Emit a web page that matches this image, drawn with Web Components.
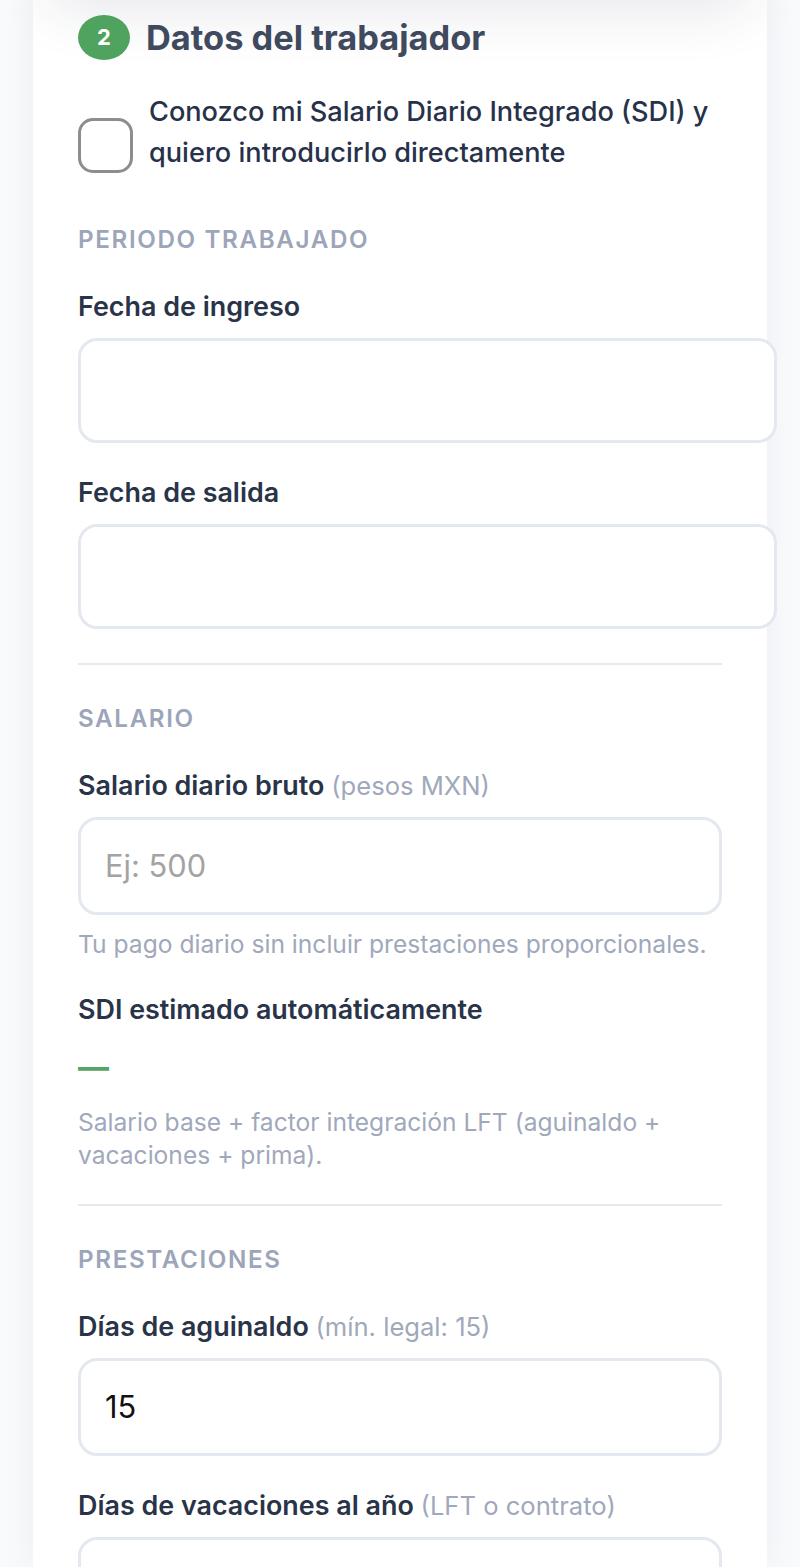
<!DOCTYPE html>
<html lang="es">
<head>
<meta charset="utf-8">
<title>Datos del trabajador</title>
<style>
  html, body { margin: 0; height: 1567px; overflow: hidden; background: #f9fafc; }
  body { font-family: Inter, "Liberation Sans", sans-serif; }
</style>
</head>
<body>
<form-card>
  <step-heading step="2">Datos del trabajador</step-heading>
  <sdi-check>Conozco mi Salario Diario Integrado (SDI) y quiero introducirlo directamente</sdi-check>

  <group-title>PERIODO TRABAJADO</group-title>
  <form-field label="Fecha de ingreso" kind="date"></form-field>
  <form-field label="Fecha de salida" kind="date"></form-field>
  <form-rule></form-rule>

  <group-title>SALARIO</group-title>
  <form-field label="Salario diario bruto" note="(pesos MXN)" placeholder="Ej: 500" hint="Tu pago diario sin incluir prestaciones proporcionales."></form-field>
  <form-field label="SDI estimado automáticamente" kind="output" value="—" hint="Salario base + factor integración LFT (aguinaldo + vacaciones + prima)."></form-field>
  <form-rule></form-rule>

  <group-title>PRESTACIONES</group-title>
  <form-field label="Días de aguinaldo" note="(mín. legal: 15)" value="15"></form-field>
  <form-field label="Días de vacaciones al año" note="(LFT o contrato)"></form-field>
</form-card>

<script>
function shadow(el, html) {
  el.attachShadow({ mode: 'open' }).innerHTML = html;
}

class FormCard extends HTMLElement {
  constructor() {
    super();
    shadow(this, `
      <style>
        :host {
          display: block;
          position: relative;
          box-sizing: border-box;
          margin: 0 33px;
          padding: 14.5px 45px 0;
          height: 1567px;
          background: #fff;
          box-shadow: 0 0 34px rgba(30, 40, 70, .055);
          color: #2d3748;
        }
        /* shadow of the previous card, falls over the top of this one */
        .bleed {
          position: absolute;
          left: 14px;
          right: 14px;
          top: -70px;
          height: 70px;
          border-radius: 30px;
          box-shadow: 0 8px 60px rgba(30, 40, 70, .12);
        }
      </style>
      <div class="bleed"></div>
      <slot></slot>
    `);
  }
}

class StepHeading extends HTMLElement {
  constructor() {
    super();
    shadow(this, `
      <style>
        :host {
          display: flex;
          align-items: center;
          gap: 16px;
          position: relative;
          height: 45px;
          font-size: 34.4px;
          font-weight: 700;
          color: #3f4a5f;
        }
        .num {
          width: 52px;
          height: 45px;
          border-radius: 50%;
          background: #4fa35f;
          color: #fff;
          font-size: 22px;
          font-weight: 700;
          display: flex;
          align-items: center;
          justify-content: center;
        }
      </style>
      <span class="num">${this.getAttribute('step')}</span>
      <slot></slot>
    `);
  }
}

class SdiCheck extends HTMLElement {
  constructor() {
    super();
    shadow(this, `
      <style>
        :host {
          display: flex;
          align-items: flex-end;
          gap: 16px;
          margin: 31px 0 52px;
          font-size: 27.15px;
          font-weight: 500;
          line-height: 41px;
          color: #27324a;
        }
        .box {
          flex: none;
          box-sizing: border-box;
          width: 55px;
          height: 55px;
          border: 3px solid #8d8d8d;
          border-radius: 15px;
          background: #fff;
        }
        .txt { flex: 1; }
      </style>
      <span class="box"></span>
      <span class="txt"><slot></slot></span>
    `);
  }
}

class GroupTitle extends HTMLElement {
  constructor() {
    super();
    shadow(this, `
      <style>
        :host {
          display: block;
          margin: 0 0 34px;
          font-size: 24.2px;
          font-weight: 600;
          line-height: 30px;
          letter-spacing: 1.63px;
          color: #9ca5b9;
        }
      </style>
      <slot></slot>
    `);
  }
}

class FormField extends HTMLElement {
  constructor() {
    super();
    const label = this.getAttribute('label');
    const note = this.getAttribute('note');
    const hint = this.getAttribute('hint');
    const kind = this.getAttribute('kind');
    const value = this.getAttribute('value') || '';
    const placeholder = this.getAttribute('placeholder') || '';
    let control = `<input type="text" value="${value}" placeholder="${placeholder}">`;
    if (kind === 'date') control = `<input class="date" type="text">`;
    if (kind === 'output') control = `<div class="out">${value}</div>`;
    shadow(this, `
      <style>
        :host {
          display: block;
          margin-bottom: 32px;
        }
        label {
          display: block;
          font-size: 26.9px;
          font-weight: 600;
          line-height: 34px;
          color: #2a3448;
          margin-bottom: 14px;
        }
        label span { font-weight: 400; font-size: 25.6px; color: #a0a8bb; }
        input {
          display: block;
          box-sizing: border-box;
          width: 100%;
          height: 98px;
          padding: 0 24px;
          border: 3px solid #e4e8ef;
          border-radius: 19px;
          background: #fff;
          font: 400 30.8px Inter, "Liberation Sans", sans-serif;
          color: #111;
          outline: none;
        }
        input::placeholder { color: #a3a3a3; opacity: 1; }
        input.date { width: 699px; height: 105px; margin-top: 15px; }
        .out {
          margin-top: 20px;
          font-size: 31px;
          font-weight: 700;
          line-height: 42px;
          color: #55a565;
        }
        p {
          margin: 13px 0 -1px;
          font-size: 24.6px;
          line-height: 33px;
          color: #a0a8bb;
        }
        .out + p { margin: 18px 0 -2px; }
      </style>
      <label>${label}${note ? ` <span>${note}</span>` : ''}</label>
      ${control}
      ${hint ? `<p>${hint}</p>` : ''}
    `);
  }
}

class FormRule extends HTMLElement {
  constructor() {
    super();
    shadow(this, `
      <style>
        :host {
          display: block;
          height: 2px;
          background: #e8eaee;
          margin: 34px 0 39px;
        }
      </style>
    `);
  }
}

customElements.define('form-card', FormCard);
customElements.define('step-heading', StepHeading);
customElements.define('sdi-check', SdiCheck);
customElements.define('group-title', GroupTitle);
customElements.define('form-field', FormField);
customElements.define('form-rule', FormRule);
</script>
</body>
</html>
